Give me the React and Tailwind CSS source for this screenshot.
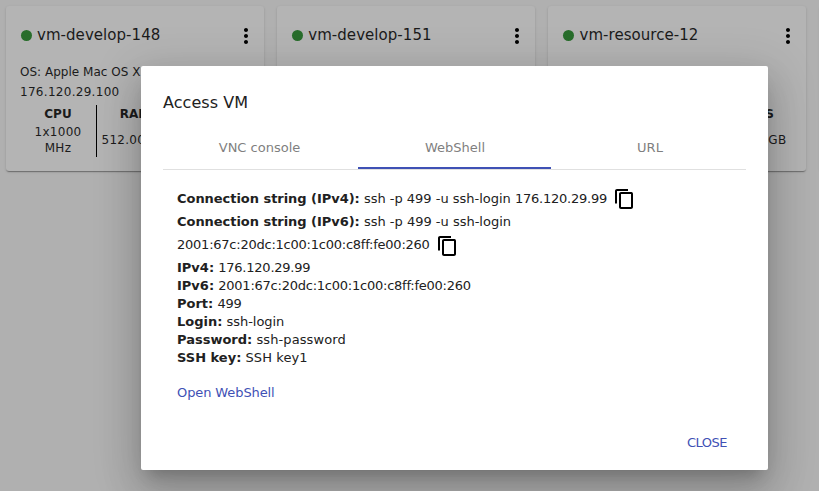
import React from "react";

const MORE_PATH =
  "M12 8c1.1 0 2-.9 2-2s-.9-2-2-2-2 .9-2 2 .9 2 2 2zm0 2c-1.1 0-2 .9-2 2s.9 2 2 2 2-.9 2-2-.9-2-2-2zm0 6c-1.1 0-2 .9-2 2s.9 2 2 2 2-.9 2-2-.9-2-2-2z";
const COPY_PATH =
  "M15 2H4C2.9 2 2 2.9 2 4V16.500h2V4h11V2zm3.500 3H8C6.900 5 6 5.900 6 7v13c0 1.100.9 2 2 2H18c1.100 0 2-.9 2-2V7c0-1.100-.7-2-1.500-2zM18 20H8V7h10v13z";

function CopyIcon() {
  return (
    <svg viewBox="0 0 24 24" className="ml-[6px] h-6 w-6 shrink-0" fill="#000">
      <path d={COPY_PATH} />
    </svg>
  );
}

function Metric({ label, lines, divider }) {
  return (
    <div
      className={
        "flex h-[52px] w-[77px] shrink-0 flex-col items-center whitespace-nowrap text-[12px] leading-4 " +
        (divider ? "border-r border-black" : "pr-[3px]")
      }
    >
      <b className="mt-px">{label}</b>
      <div className="flex grow flex-col justify-center text-center tracking-[0.3px]">
        {lines.map((line) => (
          <span key={line}>{line}</span>
        ))}
      </div>
    </div>
  );
}

function VmCard({ name, os, ip, metrics }) {
  return (
    <article className="h-[165px] w-[258px] shrink-0 overflow-hidden rounded-[3px] bg-[#b4b4b4] shadow-[0_2px_1px_-1px_rgba(0,0,0,0.2),0_1px_1px_0_rgba(0,0,0,0.14),0_1px_3px_0_rgba(0,0,0,0.12)]">
      <header className="flex h-[56px] items-center pl-[15px] pr-[6px]">
        <i className="mt-[2px] h-[11px] w-[11px] rounded-full bg-[#286d2b]" />
        <h2 className="mt-[2px] ml-[5px] grow text-[15px] tracking-[0.05px]">{name}</h2>
        <svg viewBox="0 0 24 24" className="mt-[3px] h-6 w-6" fill="#000">
          <path d={MORE_PATH} />
        </svg>
      </header>
      <div className="h-[43px] pl-[14px] text-[12px] leading-5 whitespace-nowrap">
        <p className="tracking-[0.02px]">{os}</p>
        <p className="tracking-[0.29px]">{ip}</p>
      </div>
      <div className="flex pl-[14px]">
        {metrics.map((metric, i) => (
          <Metric key={i} {...metric} divider={i < metrics.length - 1} />
        ))}
      </div>
    </article>
  );
}

const EMPTY = { label: "", lines: [] };

const CARDS = [
  {
    name: "vm-develop-148",
    os: "OS: Apple Mac OS X",
    ip: "176.120.29.100",
    metrics: [
      { label: "CPU", lines: ["1x1000", "MHz"] },
      { label: "RAM", lines: ["512.00 MB"] },
      EMPTY,
    ],
  },
  { name: "vm-develop-151", metrics: [] },
  {
    name: "vm-resource-12",
    metrics: [EMPTY, EMPTY, { label: "DISKS", lines: ["100.00 GB"] }],
  },
];

const DETAILS = [
  ["IPv4:", "176.120.29.99", "tracking-[-0.23px]"],
  ["IPv6:", "2001:67c:20dc:1c00:1c00:c8ff:fe00:260", "tracking-[-0.235px]"],
  ["Port:", "499", "tracking-[-0.2px]"],
  ["Login:", "ssh-login", "tracking-[-0.05px]"],
  ["Password:", "ssh-password", "tracking-[0.1px]"],
  ["SSH key:", "SSH key1", "tracking-[0.1px]"],
];

export default function App() {
  return (
    <div className="relative h-[491px] w-[819px] overflow-hidden bg-[#b0b0b0] font-['DejaVu_Sans',sans-serif] text-[#1b1b1b]">
      <main className="flex gap-[13.24px] pt-[6px] pl-[6px]">
        {CARDS.map((card) => (
          <VmCard key={card.name} {...card} />
        ))}
        <div className="h-[165px] w-[258px] shrink-0 rounded-[3px] bg-[#b4b4b4] shadow-[0_2px_1px_-1px_rgba(0,0,0,0.2),0_1px_1px_0_rgba(0,0,0,0.14),0_1px_3px_0_rgba(0,0,0,0.12)]" />
      </main>

      <section
        role="dialog"
        className="absolute top-[66px] left-[141px] flex h-[404px] w-[627px] flex-col rounded-[2px] bg-white px-[22px] text-[13px] text-[#212121] shadow-[0_11px_15px_-7px_rgba(0,0,0,0.2),0_24px_38px_3px_rgba(0,0,0,0.14),0_9px_46px_8px_rgba(0,0,0,0.12)]"
      >
        <h1 className="pt-[25px] text-[16px] leading-6 tracking-[0.05px]">Access VM</h1>
        <nav className="mt-[11px] grid h-[44px] grid-cols-[195px_193px_195px] border-b border-[#e0e0e0] text-[#7f7f7f]">
          <span className="flex items-center justify-center pr-[2px]">VNC console</span>
          <span className="flex items-center justify-center border-b-2 border-[#3f51b5] pt-[2px] pl-px">
            WebShell
          </span>
          <span className="flex items-center justify-center pl-[3px]">URL</span>
        </nav>
        <div className="px-[14px] pt-[17px]">
          <p className="flex h-[24px] items-center whitespace-pre">
            <b className="tracking-[-0.04px]">Connection string (IPv4):</b>
            <span className="tracking-[-0.01px]"> ssh -p 499 -u ssh-login </span>
            <span className="tracking-[-0.23px]">176.120.29.99</span>
            <CopyIcon />
          </p>
          <p className="h-[23px] leading-[22px]">
            <b className="tracking-[-0.04px]">Connection string (IPv6):</b> ssh -p 499 -u ssh-login
          </p>
          <p className="flex h-[24px] items-center">
            <span className="-mt-[2px] tracking-[-0.235px]">2001:67c:20dc:1c00:1c00:c8ff:fe00:260</span>
            <CopyIcon />
          </p>
          <dl className="pt-px leading-[18px]">
            {DETAILS.map(([label, value, tracking]) => (
              <div key={label}>
                <dt className="inline font-bold">{label}</dt>{" "}
                <dd className={"inline " + tracking}>{value}</dd>
              </div>
            ))}
          </dl>
          <a className="mt-[17px] block leading-[18px] tracking-[-0.1px] text-[#3f51b5]">Open WebShell</a>
        </div>
        <footer className="mt-auto flex h-[55px] justify-end pr-[19px] text-[#3f51b5]">
          <button className="h-[56px] leading-[56px] tracking-[-0.5px]">CLOSE</button>
        </footer>
      </section>
    </div>
  );
}
